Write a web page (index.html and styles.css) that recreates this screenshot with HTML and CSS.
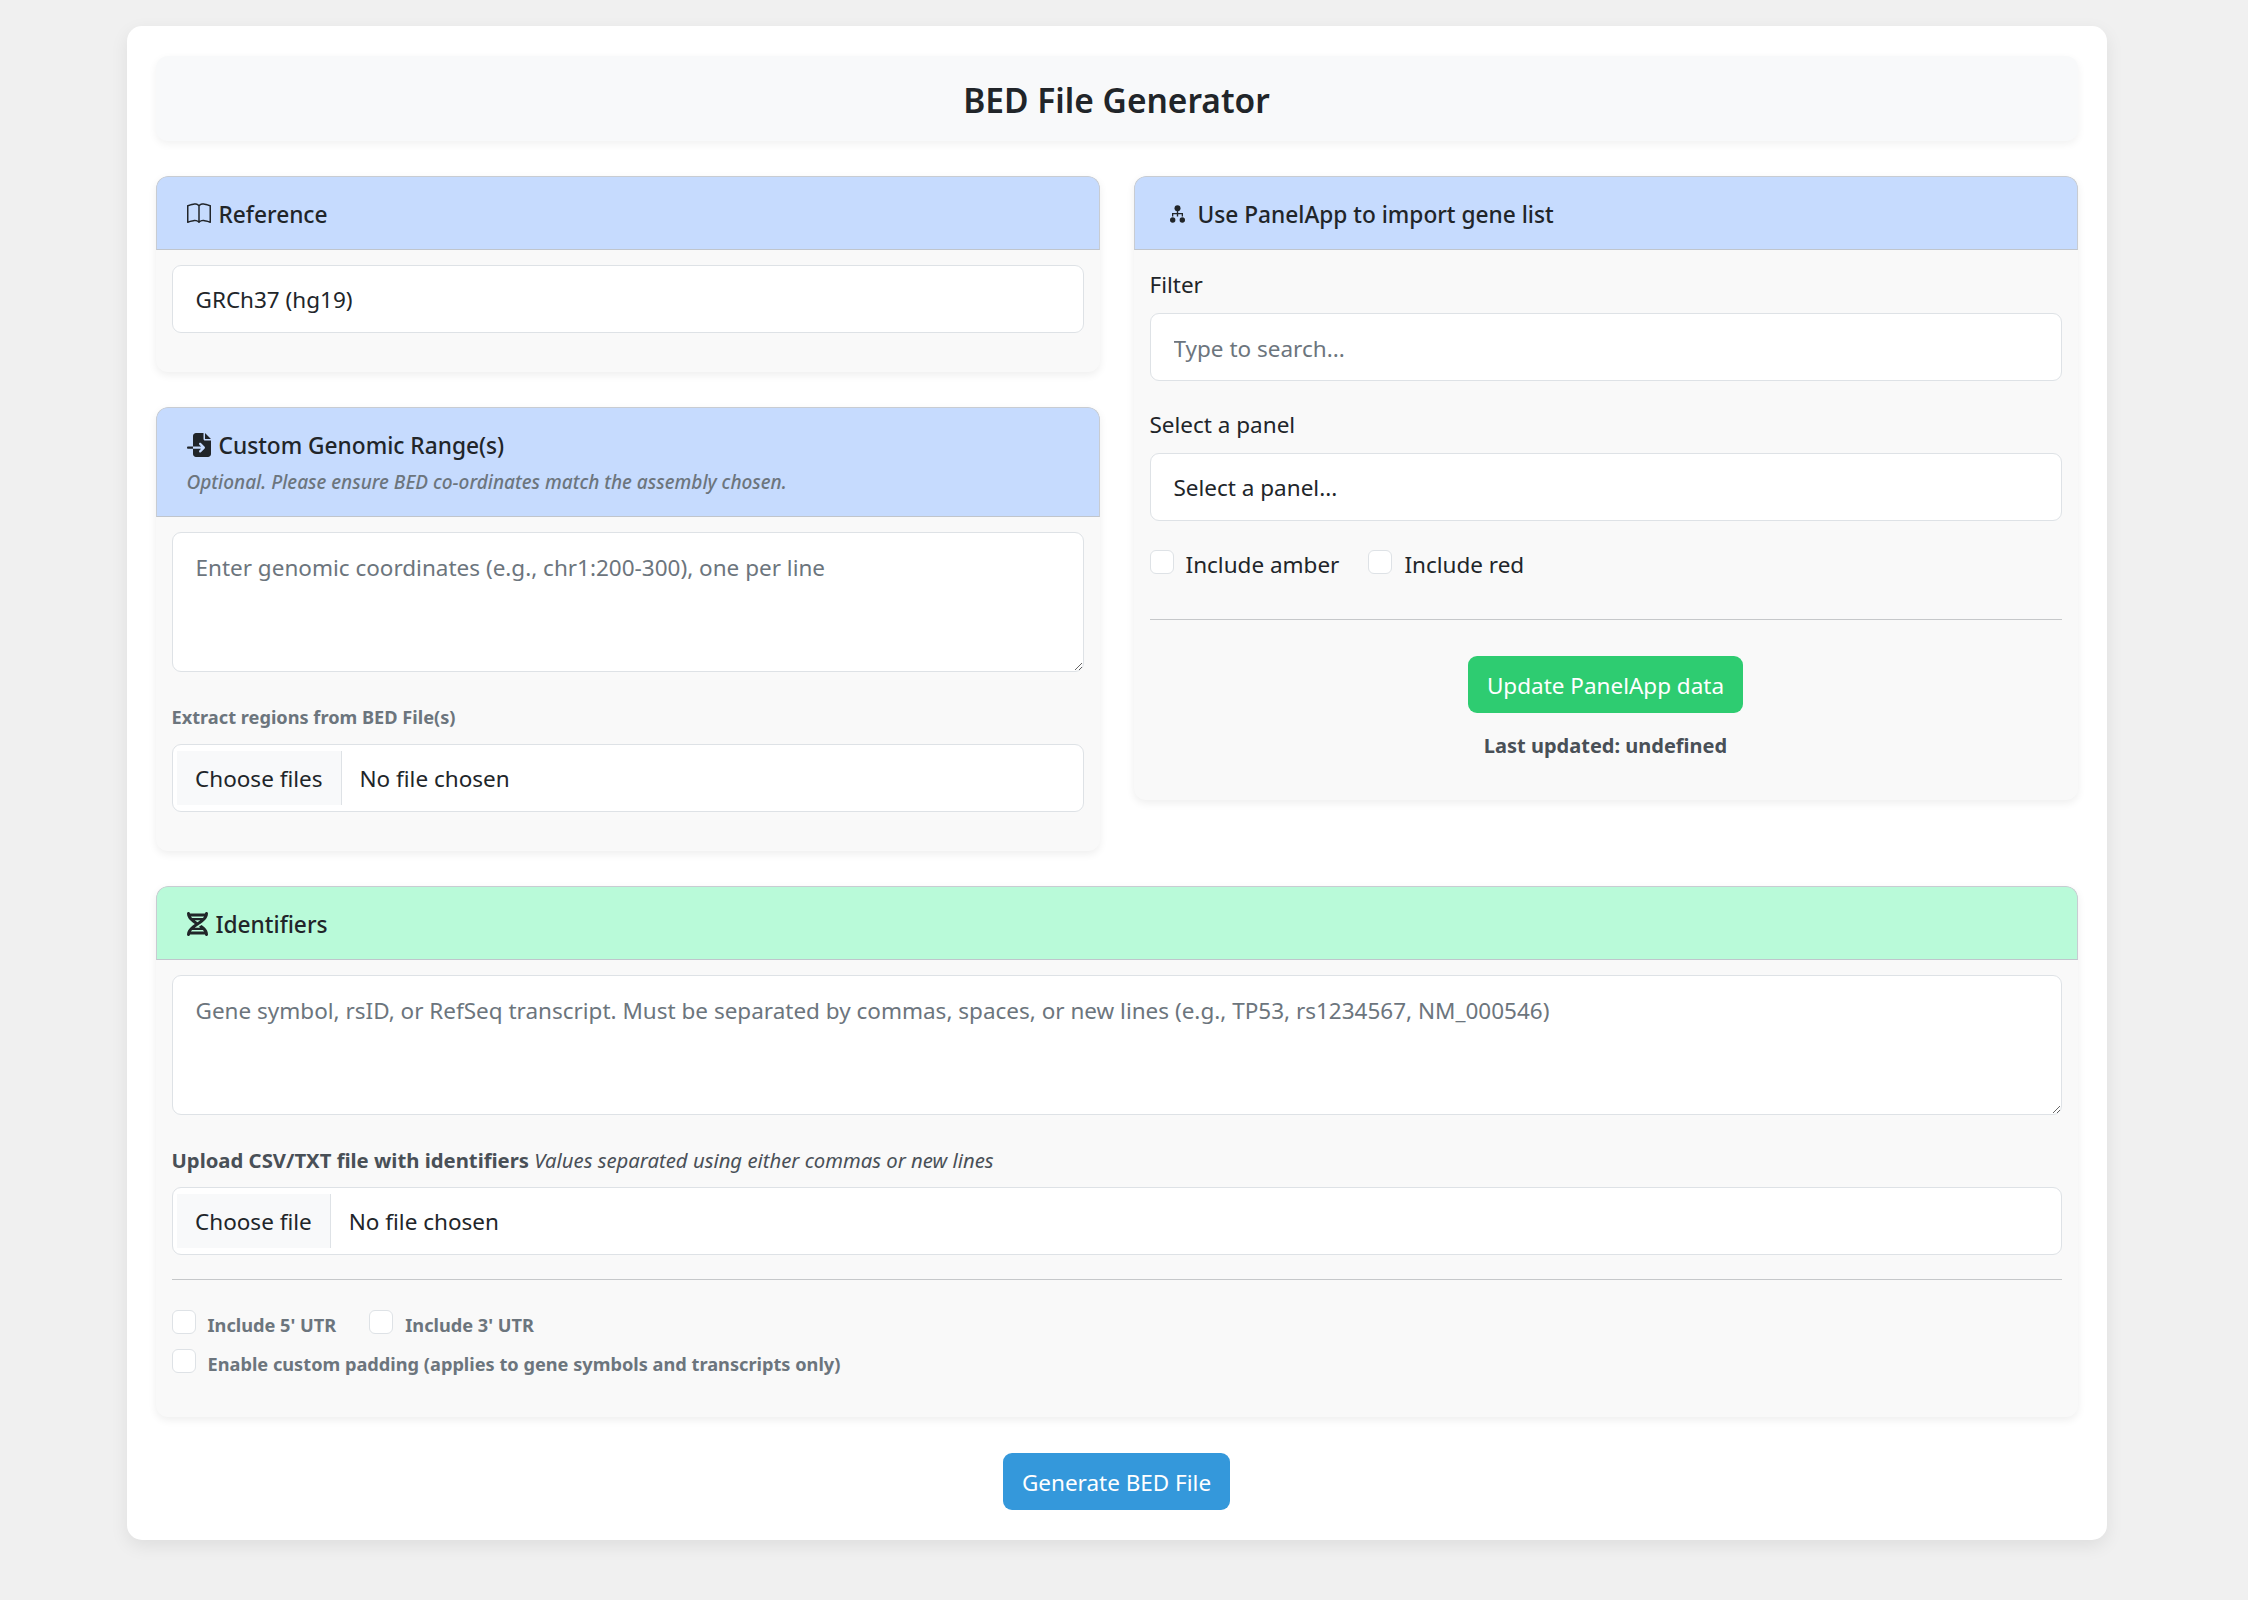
FILE: index.html
```html
<!DOCTYPE html>
<html lang="en">
<head>
<meta charset="utf-8">
<title>BED File Generator</title>
<link rel="stylesheet" href="styles.css">
</head>
<body>
<main class="container">
  <h1 class="title">BED File Generator</h1>
  <div class="columns">
    <div class="stack">
      <section class="card">
        <header class="card-head blue">
          <h2 class="head-title">
            <svg class="ico ico-book" viewBox="0 0 16 16" fill="currentColor"><path d="M1 2.828c.885-.37 2.154-.769 3.388-.893 1.33-.134 2.458.063 3.112.752v9.746c-.935-.53-2.12-.603-3.213-.493-1.18.12-2.37.461-3.287.811V2.828zm7.5-.141c.654-.689 1.782-.886 3.112-.752 1.234.124 2.503.523 3.388.893v9.923c-.918-.35-2.107-.692-3.287-.81-1.094-.111-2.278-.039-3.213.492V2.687zM8 1.783C7.015.936 5.587.81 4.287.94c-1.514.153-3.042.672-3.994 1.105A.5.5 0 0 0 0 2.5v11a.5.5 0 0 0 .707.455c.882-.4 2.303-.881 3.68-1.02 1.409-.142 2.59.087 3.223.877a.5.5 0 0 0 .78 0c.633-.79 1.814-1.019 3.222-.877 1.378.139 2.8.62 3.681 1.02A.5.5 0 0 0 16 13.5v-11a.5.5 0 0 0-.293-.455c-.952-.433-2.48-.952-3.994-1.105C10.413.809 8.985.936 8 1.783z"/></svg>
            Reference
          </h2>
        </header>
        <div class="card-body">
          <select class="control select"><option>GRCh37 (hg19)</option></select>
        </div>
      </section>
      <section class="card">
        <header class="card-head blue">
          <h2 class="head-title">
            <svg class="ico ico-import" viewBox="0 0 512 512" fill="currentColor"><path d="M128 64c0-35.300 28.700-64 64-64H352V128c0 17.700 14.300 32 32 32H512V448c0 35.300-28.700 64-64 64H192c-35.300 0-64-28.700-64-64V336H302.100l-39 39c-9.400 9.400-9.400 24.600 0 33.900s24.600 9.400 33.900 0l80-80c9.400-9.400 9.400-24.600 0-33.900l-80-80c-9.400-9.400-24.600-9.400-33.900 0s-9.400 24.600 0 33.900l39 39H128V64zm0 224v48H24c-13.300 0-24-10.700-24-24s10.700-24 24-24H128zM512 128H384V0L512 128z"/></svg>
            Custom Genomic Range(s)
          </h2>
          <p class="head-note">Optional. Please ensure BED co-ordinates match the assembly chosen.</p>
        </header>
        <div class="card-body">
          <textarea class="control area" placeholder="Enter genomic coordinates (e.g., chr1:200-300), one per line"></textarea>
          <label class="small-label">Extract regions from BED File(s)</label>
          <div class="control file"><span class="file-btn">Choose files</span><span class="file-name">No file chosen</span></div>
        </div>
      </section>
    </div>
    <section class="card panel-card">
      <header class="card-head blue">
        <h2 class="head-title">
          <svg class="ico ico-tree" viewBox="0 0 15 18" fill="currentColor"><circle cx="7.500" cy="3.200" r="3"/><circle cx="2.700" cy="15" r="2.700"/><circle cx="12.300" cy="15" r="2.700"/><path d="M6.800 5h1.400v3H13v3.500h-1.300V9.300H8.200v2.200H6.800V9.300H3.300v2.200H2V8h4.800z"/></svg>
          Use PanelApp to import gene list
        </h2>
      </header>
      <div class="card-body">
        <label class="field-label">Filter</label>
        <input class="control text" type="text" placeholder="Type to search...">
        <label class="field-label">Select a panel</label>
        <select class="control select"><option>Select a panel...</option></select>
        <div class="checks">
          <label class="check"><span class="box"></span>Include amber</label>
          <label class="check"><span class="box"></span>Include red</label>
        </div>
        <hr class="rule rule-panel">
        <div class="centered">
          <button class="btn btn-green" type="button">Update PanelApp data</button>
          <p class="updated">Last updated: undefined</p>
        </div>
      </div>
    </section>
  </div>
  <section class="card identifiers">
    <header class="card-head green">
      <h2 class="head-title">
        <svg class="ico ico-dna" viewBox="0 0 448 512" fill="currentColor"><path d="M416 0c17.700 0 32 14.300 32 32c0 59.800-30.300 107.500-69.400 146.600c-28 28-62.500 53.500-97.300 77.400l-2.500 1.700c-11.900 8.100-23.800 16.100-35.500 23.900l0 0 0 0 0 0-1.600 1c-6 4-11.900 7.900-17.800 11.900c-20.900 14-40.800 27.700-59.300 41.500H283.300c-9.800-7.400-20.100-14.700-30.700-22.100l7-4.700 3-2c15.100-10.100 30.900-20.600 46.700-31.600c25 18.100 48.900 37.300 69.400 57.700C417.700 372.500 448 420.200 448 480c0 17.700-14.300 32-32 32s-32-14.300-32-32H64c0 17.700-14.300 32-32 32s-32-14.300-32-32c0-59.800 30.300-107.500 69.400-146.600c28-28 62.500-53.500 97.300-77.400c-34.800-23.900-69.300-49.300-97.300-77.400C30.300 139.500 0 91.800 0 32C0 14.300 14.300 0 32 0S64 14.300 64 32H384c0-17.700 14.300-32 32-32zM338.600 384H109.400c-10.100 10.600-18.600 21.300-25.500 32H364.100c-6.800-10.700-15.300-21.400-25.500-32zM109.400 128H338.600c10.100-10.700 18.600-21.300 25.500-32H83.900c6.800 10.700 15.300 21.300 25.500 32zm55.400 48c18.100 15.500 38.200 30.400 59.200 45c21-14.600 41.100-29.500 59.200-45H164.800z"/></svg>
        Identifiers
      </h2>
    </header>
    <div class="card-body">
      <textarea class="control area area-wide" placeholder="Gene symbol, rsID, or RefSeq transcript. Must be separated by commas, spaces, or new lines (e.g., TP53, rs1234567, NM_000546)"></textarea>
      <label class="upload-label"><strong>Upload CSV/TXT file with identifiers</strong> <em>Values separated using either commas or new lines</em></label>
      <div class="control file"><span class="file-btn">Choose file</span><span class="file-name">No file chosen</span></div>
      <hr class="rule rule-ident">
      <div class="checks muted first-row">
        <label class="check"><span class="box"></span>Include 5' UTR</label>
        <label class="check"><span class="box"></span>Include 3' UTR</label>
      </div>
      <div class="checks muted last-row">
        <label class="check"><span class="box"></span>Enable custom padding (applies to gene symbols and transcripts only)</label>
      </div>
    </div>
  </section>
  <div class="centered">
    <button class="btn btn-blue" type="button">Generate BED File</button>
  </div>
</main>
</body>
</html>
```
FILE: styles.css
```css
* { box-sizing: border-box; }
html, body { margin: 0; }
body {
  background: #f0f0f0;
  color: #212529;
  font-family: "Noto Sans", "Open Sans", sans-serif;
  font-size: 22.5px;
  line-height: 36px;
  min-height: 1600px;
  padding: 26px 15px 0 0;
}
.container {
  width: 1980px;
  margin: 0 auto;
  padding: 30px 29px;
  background: #fff;
  border-radius: 15px;
  box-shadow: 0 6px 18px rgba(0, 0, 0, 0.08);
}
.title {
  margin: 0 0 35px;
  height: 85px;
  background: #f8f9fa;
  border-radius: 12px;
  box-shadow: 0 3px 8px rgba(0, 0, 0, 0.06);
  font-size: 33.5px;
  font-weight: 600;
  line-height: 89px;
  text-align: center;
}
.columns {
  display: grid;
  grid-template-columns: 944px 944px;
  justify-content: space-between;
  align-items: start;
  margin-bottom: 35px;
}
.stack { display: flex; flex-direction: column; gap: 35px; }
.card {
  background: #f9f9f9;
  border-radius: 12px;
  box-shadow: 0 3px 9px rgba(0, 0, 0, 0.07);
  overflow: hidden;
}
.panel-card { height: 624px; }
.identifiers { margin-bottom: 36px; }
.card-head {
  border: 1px solid #c8ccd2;
  border-bottom-color: #c0c5cc;
  border-radius: 12px 12px 0 0;
  padding: 20px 30px 16px;
}
.blue { background: #c6dbfe; }
.green { background: #b9fad9; }
.head-title {
  display: flex;
  align-items: center;
  margin: 0;
  font-size: 22.7px;
  font-weight: 500;
  line-height: 36px;
}
.head-note {
  margin: 0;
  color: #6c757d;
  font-size: 19px;
  font-style: italic;
  font-weight: 500;
  line-height: 36px;
}
.ico { flex: none; display: block; position: relative; top: -1px; }
.ico-book { width: 24px; height: 24px; margin-right: 8px; }
.ico-import { width: 24px; height: 24px; margin-right: 8px; }
.ico-tree { width: 15px; height: 18px; margin: 0 13px 0 5px; }
.ico-dna { width: 21px; height: 24px; margin-right: 8px; }
.card-body { padding: 15px 16px 15px; }
.control {
  display: block;
  width: 100%;
  margin: 0 0 24px;
  border: 1.5px solid #dee2e6;
  border-radius: 9px;
  background: #fff;
  color: #212529;
  font: inherit;
  outline: none;
}
.select, .text {
  height: 68px;
  padding: 2px 23px 0;
  appearance: none;
}
.text::placeholder, .area::placeholder { color: #6c757d; opacity: 1; }
.area {
  height: 140px;
  padding: 17px 23px 13px;
  margin-bottom: 30px;
}
.area-wide { margin-bottom: 31px; }
.file {
  display: flex;
  align-items: center;
  height: 68px;
  padding: 0 4.5px;
}
.file-btn {
  height: 54px;
  margin-right: 18px;
  padding: 2px 18px 0;
  border-right: 1.5px solid #dee2e6;
  background: #f8f9fa;
  line-height: 52px;
}
.file-name { padding-top: 2px; }
.small-label {
  display: block;
  margin-bottom: 12px;
  color: #6c757d;
  font-size: 18.2px;
  font-weight: 700;
  line-height: 30px;
}
.upload-label {
  display: block;
  margin-bottom: 13px;
  color: #495057;
  font-size: 20.3px;
  line-height: 28px;
}
.field-label {
  display: block;
  padding-top: 2px;
  margin-bottom: 10px;
}
.checks {
  display: flex;
  gap: 29px;
  height: 36px;
  margin-bottom: 24px;
}
.check {
  display: flex;
  align-items: center;
  padding-top: 4px;
}
.box {
  flex: none;
  width: 24px;
  height: 24px;
  margin: 0 12px 0 0;
  background: #fff;
  border: 1.5px solid #dee2e6;
  border-radius: 6px;
  transform: translateY(-3px);
}
.muted {
  gap: 33px;
  color: #6c757d;
  font-size: 18.2px;
  font-weight: 700;
}
.muted .check { padding-top: 6px; }
.first-row { margin-bottom: 3px; }
.last-row { margin-bottom: 23px; }
.rule {
  height: 1px;
  margin: 0;
  border: 0;
  background: #c6c8ca;
}
.rule-panel { margin: 38px 0 36px; }
.rule-ident { margin: 0 0 24px; }
.centered { text-align: center; }
.btn {
  display: inline-block;
  height: 57px;
  padding: 2px 19px 0;
  border: 0;
  border-radius: 9px;
  color: #fff;
  font: inherit;
}
.btn-green { background: #2ecc71; }
.btn-blue { background: #3498db; }
.updated {
  margin: 15px 0 0;
  color: #495057;
  font-size: 20px;
  font-weight: 700;
  line-height: 36px;
}
```
